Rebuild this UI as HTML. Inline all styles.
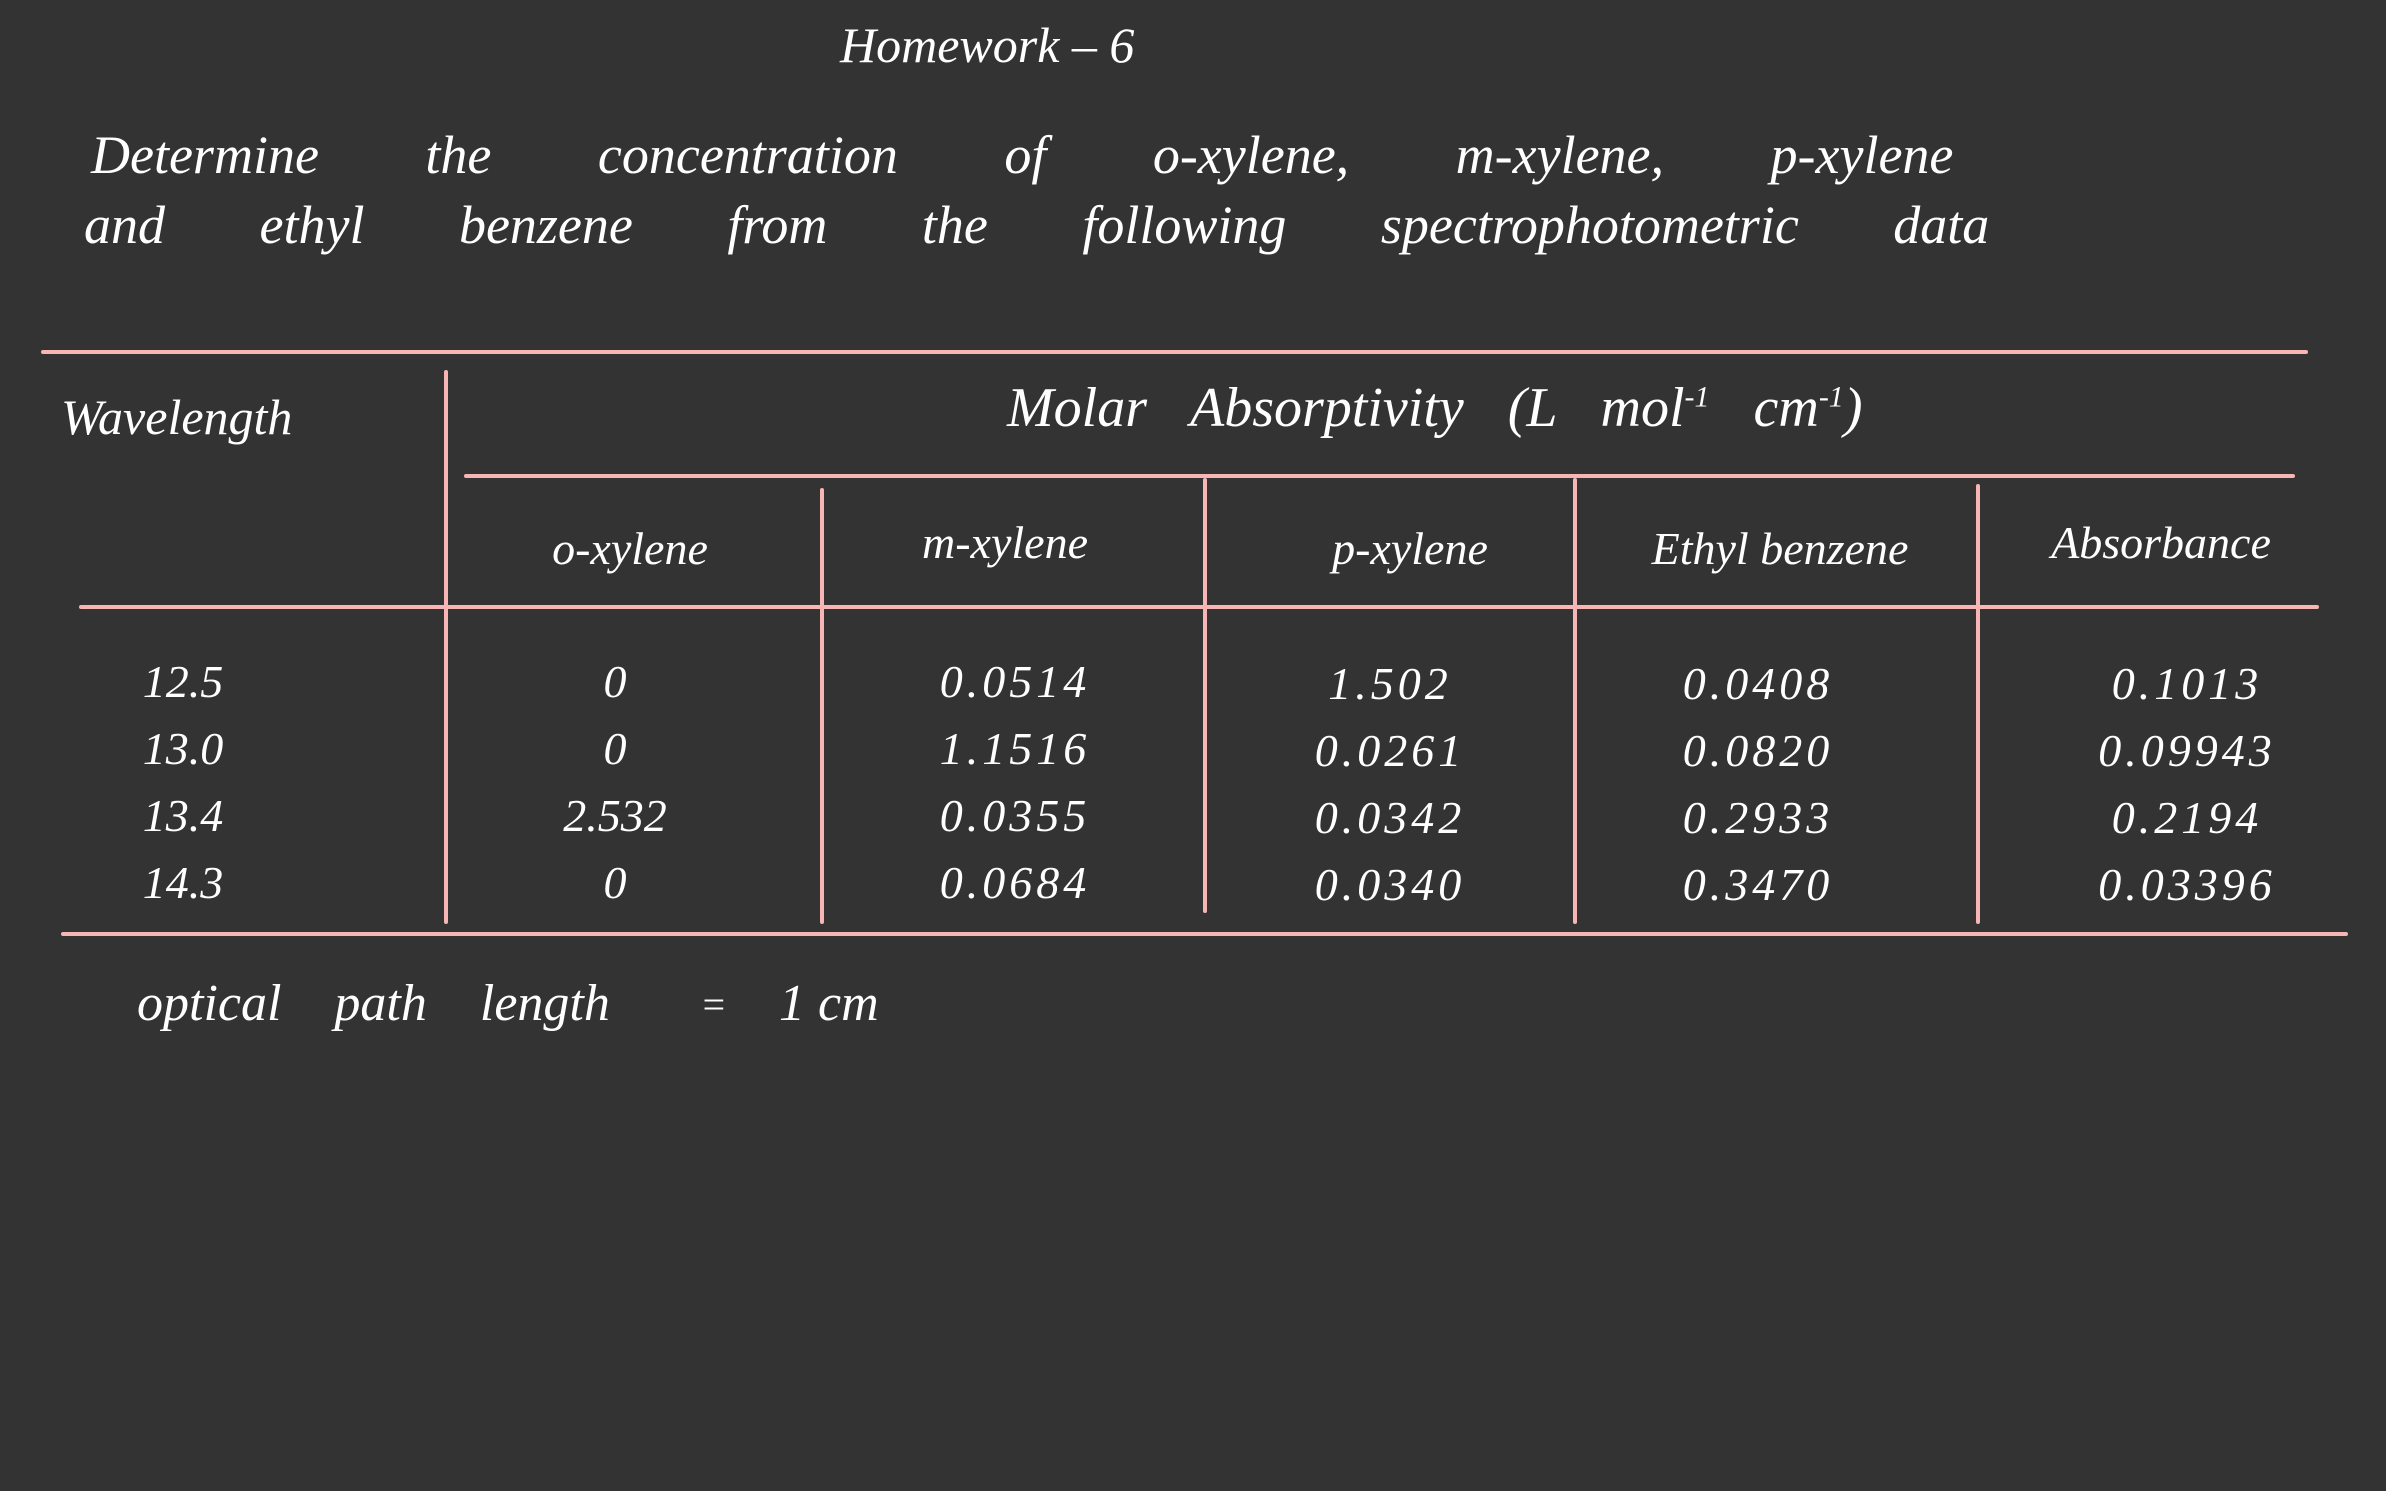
<!DOCTYPE html>
<html><head><meta charset="utf-8"><style>
html,body{margin:0;padding:0;background:#333333;}
body{width:2386px;height:1491px;position:relative;overflow:hidden;font-family:"Liberation Serif",serif;font-style:italic;color:#fff;}
.t{position:absolute;white-space:nowrap;line-height:1;}
.h{position:absolute;height:4px;background:#f7b5b5;border-radius:2px;}
.v{position:absolute;width:4px;background:#f7b5b5;border-radius:2px;}
.c{transform:translateX(-50%);}
</style></head><body>
<div class="t" style="left:840px;top:20px;font-size:50px;">Homework – 6</div>
<div class="t" style="left:91px;top:128px;font-size:54px;word-spacing:93px;">Determine the concentration of o-xylene, m-xylene, p-xylene</div>
<div class="t" style="left:84px;top:198px;font-size:54px;word-spacing:81px;">and ethyl benzene from the following spectrophotometric data</div>

<div class="h" style="left:41px;top:350px;width:2267px;"></div>
<div class="v" style="left:444px;top:370px;height:554px;"></div>
<div class="t" style="left:61px;top:392px;font-size:50px;">Wavelength</div>
<div class="t" style="left:1007px;top:380px;font-size:56px;word-spacing:30px;">Molar Absorptivity (L mol<sup style="font-size:30px">-1</sup> cm<sup style="font-size:30px">-1</sup>)</div>
<div class="h" style="left:464px;top:474px;width:1831px;"></div>
<div class="v" style="left:820px;top:488px;height:436px;"></div>
<div class="v" style="left:1203px;top:478px;height:435px;"></div>
<div class="v" style="left:1573px;top:478px;height:446px;"></div>
<div class="v" style="left:1976px;top:484px;height:440px;"></div>

<div class="t c" style="left:630px;top:526px;font-size:46px;">o-xylene</div>
<div class="t c" style="left:1005px;top:520px;font-size:46px;">m-xylene</div>
<div class="t c" style="left:1410px;top:526px;font-size:46px;">p-xylene</div>
<div class="t c" style="left:1780px;top:526px;font-size:46px;">Ethyl benzene</div>
<div class="t c" style="left:2161px;top:520px;font-size:46px;">Absorbance</div>
<div class="h" style="left:79px;top:605px;width:2240px;"></div>

<div class="t c" style="left:183px;top:648px;font-size:46px;line-height:67px;text-align:center;">12.5<br>13.0<br>13.4<br>14.3</div>
<div class="t c" style="left:615px;top:648px;font-size:46px;line-height:67px;text-align:center;">0<br>0<br>2.532<br>0</div>
<div class="t c" style="left:1015px;top:648px;font-size:46px;line-height:67px;text-align:center;letter-spacing:4px;">0.0514<br>1.1516<br>0.0355<br>0.0684</div>
<div class="t c" style="left:1390px;top:650px;font-size:46px;line-height:67px;text-align:center;letter-spacing:4px;">1.502<br>0.0261<br>0.0342<br>0.0340</div>
<div class="t c" style="left:1758px;top:650px;font-size:46px;line-height:67px;text-align:center;letter-spacing:4px;">0.0408<br>0.0820<br>0.2933<br>0.3470</div>
<div class="t c" style="left:2187px;top:650px;font-size:46px;line-height:67px;text-align:center;letter-spacing:4px;">0.1013<br>0.09943<br>0.2194<br>0.03396</div>
<div class="h" style="left:61px;top:932px;width:2287px;"></div>

<div class="t" style="left:137px;top:978px;font-size:52px;word-spacing:40px;">optical path length</div>
<div class="t" style="left:700px;top:985px;font-size:40px;">=</div>
<div class="t" style="left:779px;top:978px;font-size:52px;">1 cm</div>
</body></html>
